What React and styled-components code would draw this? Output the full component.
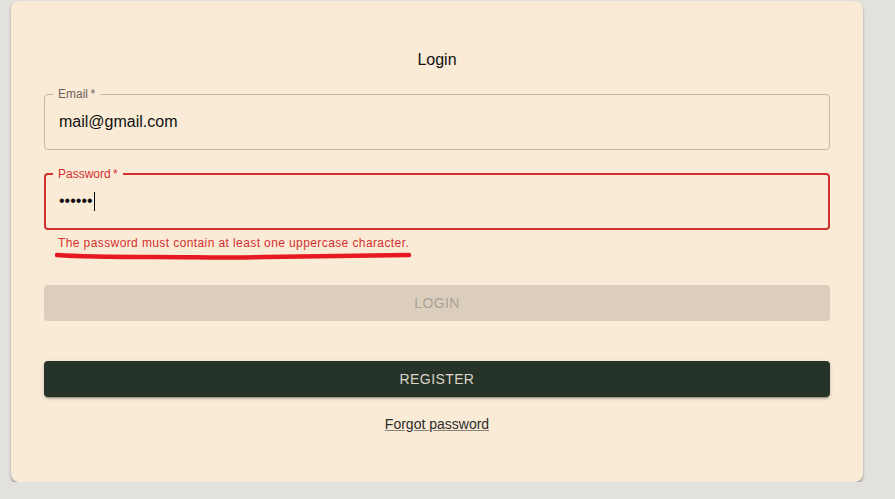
import React from "react";
import styled, { createGlobalStyle } from "styled-components";

const GlobalStyle = createGlobalStyle`
  body {
    margin: 0;
    background: #e2e1de;
    font-family: "Liberation Sans", Arial, sans-serif;
  }
`;

const Page = styled.div`
  padding: 1px 0 0 11px;
`;

const Card = styled.form`
  width: 852px;
  box-sizing: border-box;
  padding: 47px 33px 48px;
  background: #faebd7;
  border-radius: 8px;
  box-shadow: 0 2px 3px rgba(0, 0, 0, 0.28), 0 1px 1px rgba(0, 0, 0, 0.12);
  display: flex;
  flex-direction: column;
`;

const Title = styled.h2`
  margin: 0 0 22px;
  font-size: 16px;
  font-weight: normal;
  line-height: 24px;
  text-align: center;
  color: #111;
`;

const Field = styled.div`
  position: relative;
  margin-top: ${(p) => p.$gap || 0}px;
`;

const Outline = styled.fieldset`
  margin: 0;
  box-sizing: border-box;
  height: 62px;
  position: relative;
  top: -6px;
  padding: ${(p) => (p.$error ? "0 7px" : "0 8px")};
  border: ${(p) => (p.$error ? "2px solid #d32f2f" : "1px solid #c2b6a7")};
  border-radius: 4px;
  display: flex;
  align-items: center;
`;

const Legend = styled.legend`
  padding: 0 5px;
  font-size: 12px;
  line-height: 12px;
  color: ${(p) => (p.$error ? "#d32f2f" : "#6a6158")};
`;

const Value = styled.span`
  padding: 0 6px;
  margin-top: -6px;
  font-size: 16px;
  color: #111;
  display: flex;
  align-items: center;
`;

const Caret = styled.span`
  display: inline-block;
  width: 1px;
  height: 19px;
  background: #000;
  margin-left: 1px;
`;

const HelperWrap = styled.div`
  position: relative;
  margin: -3px 14px 0;
`;

const Helper = styled.p`
  margin: 0;
  font-size: 12px;
  line-height: 20px;
  letter-spacing: 0.4px;
  color: #d32f2f;
`;

const Scribble = styled.svg`
  position: absolute;
  left: -3px;
  top: 18px;
  pointer-events: none;
`;

const Button = styled.button`
  height: 36px;
  margin-top: ${(p) => p.$gap}px;
  border: 0;
  border-radius: 4px;
  font-family: inherit;
  font-size: 14px;
  letter-spacing: 0.4px;
  text-transform: uppercase;
  background: ${(p) => (p.disabled ? "#dccebc" : "#253328")};
  color: ${(p) => (p.disabled ? "#aaa197" : "#ddd5c9")};
  box-shadow: ${(p) =>
    p.disabled
      ? "none"
      : "0 3px 1px -2px rgba(0,0,0,0.2), 0 2px 2px rgba(0,0,0,0.14), 0 1px 5px rgba(0,0,0,0.12)"};
`;

const Forgot = styled.a`
  align-self: center;
  margin-top: 17px;
  font-size: 14px;
  line-height: 20px;
  color: #2b2b2b;
  text-decoration: underline;
  text-decoration-color: #8a8278;
`;

const Login = () => (
  <Page>
    <GlobalStyle />
    <Card onSubmit={(e) => e.preventDefault()}>
      <Title>Login</Title>
      <Field>
        <Outline>
          <Legend>Email&thinsp;*</Legend>
          <Value>mail@gmail.com</Value>
        </Outline>
      </Field>
      <Field $gap={18}>
        <Outline $error>
          <Legend $error>Password&thinsp;*</Legend>
          <Value>
            ••••••
            <Caret />
          </Value>
        </Outline>
      </Field>
      <HelperWrap>
        <Helper>The password must contain at least one uppercase character.</Helper>
        <Scribble width="360" height="10" viewBox="0 0 360 10">
          <path
            d="M2 4 C 30 6, 60 6, 100 6 S 170 7, 210 6 S 290 5, 354 4"
            fill="none"
            stroke="#e5191f"
            strokeWidth="4.5"
            strokeLinecap="round"
          />
        </Scribble>
      </HelperWrap>
      <Button type="button" disabled $gap={32}>
        Login
      </Button>
      <Button type="button" $gap={40}>
        Register
      </Button>
      <Forgot href="#">Forgot password</Forgot>
    </Card>
  </Page>
);

export default Login;
